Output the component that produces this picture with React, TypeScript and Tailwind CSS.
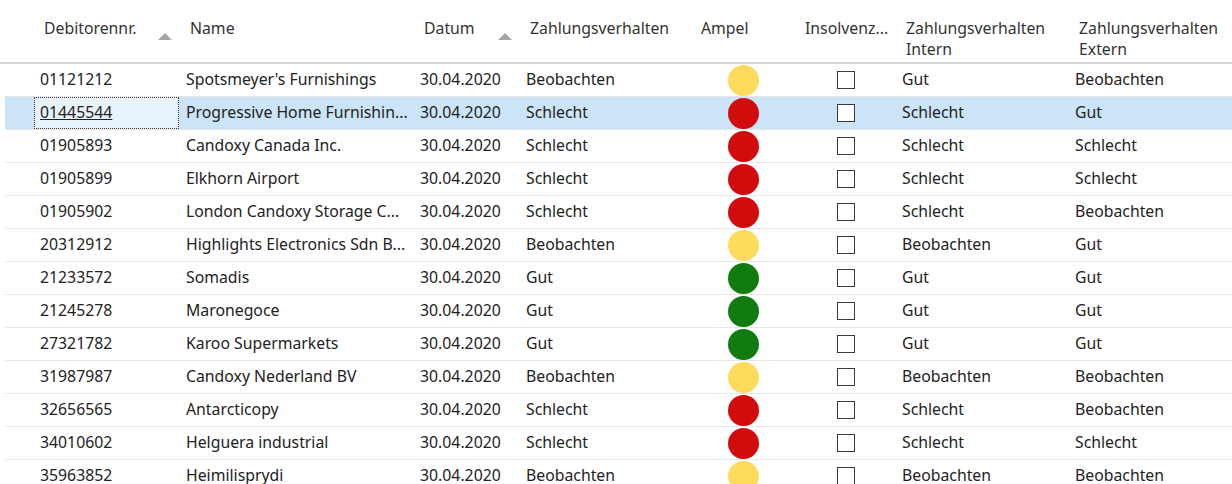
import React from "react";

type Level = "Gut" | "Schlecht" | "Beobachten";

const rows: [string, string, Level, Level, Level][] = [
  ["01121212", "Spotsmeyer's Furnishings", "Beobachten", "Gut", "Beobachten"],
  ["01445544", "Progressive Home Furnishin...", "Schlecht", "Schlecht", "Gut"],
  ["01905893", "Candoxy Canada Inc.", "Schlecht", "Schlecht", "Schlecht"],
  ["01905899", "Elkhorn Airport", "Schlecht", "Schlecht", "Schlecht"],
  ["01905902", "London Candoxy Storage C...", "Schlecht", "Schlecht", "Beobachten"],
  ["20312912", "Highlights Electronics Sdn B...", "Beobachten", "Beobachten", "Gut"],
  ["21233572", "Somadis", "Gut", "Gut", "Gut"],
  ["21245278", "Maronegoce", "Gut", "Gut", "Gut"],
  ["27321782", "Karoo Supermarkets", "Gut", "Gut", "Gut"],
  ["31987987", "Candoxy Nederland BV", "Beobachten", "Beobachten", "Beobachten"],
  ["32656565", "Antarcticopy", "Schlecht", "Schlecht", "Beobachten"],
  ["34010602", "Helguera industrial", "Schlecht", "Schlecht", "Schlecht"],
  ["35963852", "Heimilisprydi", "Beobachten", "Beobachten", "Beobachten"],
];

const lamp: Record<Level, string> = {
  Gut: "bg-[#107c10]",
  Schlecht: "bg-[#d10c0c]",
  Beobachten: "bg-[#fedb5c]",
};

const cols = "grid grid-cols-[30px_146px_234px_106px_176px_104px_96px_173px_1fr]";

function SortArrow() {
  return (
    <svg width="14" height="8" viewBox="0 0 14 8" className="absolute bottom-[22px] right-[9px]">
      <path d="M0 8 L7 1 L14 8 Z" fill="#a6a6a6" />
    </svg>
  );
}

export default function App() {
  return (
    <div
      className="w-[1232px] h-[484px] overflow-hidden bg-white text-[15.8px] text-[#222]"
      style={{ fontFamily: "'Noto Sans', 'Open Sans', sans-serif" }}
    >
      {/* Header */}
      <div className={`${cols} h-[64px] border-b-2 border-[#d6d6d6] leading-[21px] text-[#333] pl-[5px]`}>
        <div />
        <div className="relative pt-[18px] pl-[9px]">
          Debitorennr.
          <SortArrow />
        </div>
        <div className="pt-[18px] pl-[9px]">Name</div>
        <div className="relative pt-[18px] pl-[9px]">
          Datum
          <SortArrow />
        </div>
        <div className="pt-[18px] pl-[9px]">Zahlungsverhalten</div>
        <div className="pt-[18px] pl-[4px]">Ampel</div>
        <div className="pt-[18px] pl-[4px] whitespace-nowrap">Insolvenz...</div>
        <div className="pt-[18px] pl-[9px]">
          Zahlungsverhalten
          <br />
          Intern
        </div>
        <div className="pt-[18px] pl-[9px] whitespace-nowrap">
          Zahlungsverhalten
          <br />
          Extern
        </div>
      </div>

      {/* Rows */}
      <div className="pl-[5px]">
        {rows.map(([nr, name, zv, intern, extern], i) => {
          const selected = i === 1;
          return (
            <div
              key={nr}
              className={`${cols} h-[33px] items-center border-b border-[#e6e6e6] ${
                selected ? "bg-[#cce4f7]" : ""
              }`}
            >
              <div />
              <div
                className={`h-full flex items-center pl-[5px] ${
                  selected ? "bg-[#e8f2fb] border border-dotted border-[#333] underline -ml-[1px] mr-[2px]" : ""
                }`}
              >
                {nr}
              </div>
              <div className="pl-[5px] whitespace-nowrap overflow-hidden">{name}</div>
              <div className="pl-[5px]">30.04.2020</div>
              <div className="pl-[5px]">{zv}</div>
              <div className="flex justify-center pr-[12px]">
                <div className={`w-[31px] h-[31px] rounded-full ${lamp[zv]}`} />
              </div>
              <div className="flex justify-center pr-[6px]">
                <div className="w-[18px] h-[18px] border-[1.5px] border-[#3a3a3a] bg-white" />
              </div>
              <div className="pl-[5px]">{intern}</div>
              <div className="pl-[5px]">{extern}</div>
            </div>
          );
        })}
      </div>
    </div>
  );
}
